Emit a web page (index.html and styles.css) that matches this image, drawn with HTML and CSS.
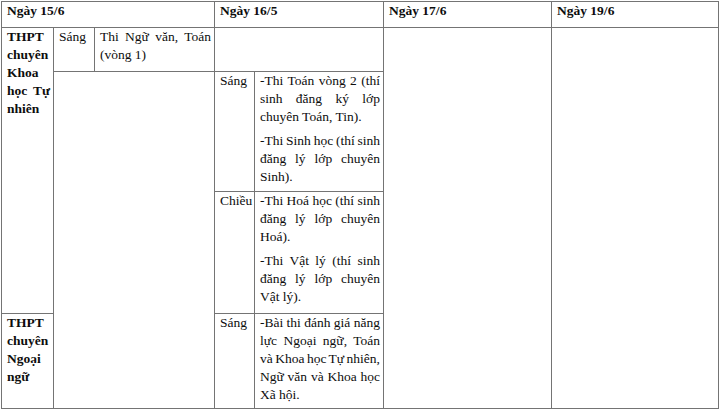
FILE: index.html
```html
<!DOCTYPE html>
<html lang="vi">
<head>
<meta charset="utf-8">
<title>Lịch thi</title>
<link rel="stylesheet" href="styles.css">
</head>
<body>
<table class="schedule">
  <colgroup>
    <col class="c-a"><col class="c-b"><col class="c-c"><col class="c-d"><col class="c-e"><col class="c-f"><col class="c-g">
  </colgroup>
  <tr class="r-head">
    <th colspan="3">Ngày 15/6</th>
    <th colspan="2">Ngày 16/5</th>
    <th>Ngày 17/6</th>
    <th>Ngày 19/6</th>
  </tr>
  <tr class="r-1">
    <td rowspan="3" class="school">
      <span class="ln">THPT</span>
      <span class="ln">chuyên</span>
      <span class="ln">Khoa</span>
      <span class="ln jl">học Tự</span>
      <span class="ln">nhiên</span>
    </td>
    <td class="sess sess-b">Sáng</td>
    <td class="txt">
      <span class="ln jl">Thi Ngữ văn, Toán</span>
      <span class="ln">(vòng 1)</span>
    </td>
    <td colspan="2"></td>
    <td rowspan="4"></td>
    <td rowspan="4"></td>
  </tr>
  <tr class="r-2">
    <td colspan="2" rowspan="3"></td>
    <td class="sess">Sáng</td>
    <td class="txt">
      <p class="para">
        <span class="ln jl">-Thi Toán vòng 2 (thí</span>
        <span class="ln jl">sinh đăng ký lớp</span>
        <span class="ln">chuyên Toán, Tin).</span>
      </p>
      <p class="para">
        <span class="ln jl">-Thi Sinh học (thí sinh</span>
        <span class="ln jl">đăng lý lớp chuyên</span>
        <span class="ln">Sinh).</span>
      </p>
    </td>
  </tr>
  <tr class="r-3">
    <td class="sess">Chiều</td>
    <td class="txt">
      <p class="para">
        <span class="ln jl">-Thi Hoá học (thí sinh</span>
        <span class="ln jl">đăng lý lớp chuyên</span>
        <span class="ln">Hoá).</span>
      </p>
      <p class="para">
        <span class="ln jl">-Thi Vật lý (thí sinh</span>
        <span class="ln jl">đăng lý lớp chuyên</span>
        <span class="ln">Vật lý).</span>
      </p>
    </td>
  </tr>
  <tr class="r-4">
    <td class="school">
      <span class="ln">THPT</span>
      <span class="ln">chuyên</span>
      <span class="ln">Ngoại</span>
      <span class="ln">ngữ</span>
    </td>
    <td class="sess">Sáng</td>
    <td class="txt">
      <span class="ln jl">-Bài thi đánh giá năng</span>
      <span class="ln jl">lực Ngoại ngữ, Toán</span>
      <span class="ln jl">và Khoa học Tự nhiên,</span>
      <span class="ln jl">Ngữ văn và Khoa học</span>
      <span class="ln">Xã hội.</span>
    </td>
  </tr>
</table>
</body>
</html>
```

FILE: styles.css
```css
html, body {
  margin: 0;
  padding: 0;
  background: #ffffff;
}

body {
  font-family: "Liberation Serif", "Times New Roman", serif;
  font-size: 13.5px;
  line-height: 18px;
  color: #0d0d0d;
}

.schedule {
  margin: 1px 0 0 1px;
  width: 718px;
  border-collapse: collapse;
  table-layout: fixed;
}

.c-a { width: 52px; }
.c-b { width: 41px; }
.c-c { width: 120px; }
.c-d { width: 40px; }
.c-e { width: 129px; }
.c-f { width: 168px; }
.c-g { width: 167px; }

.schedule th,
.schedule td {
  border: 1px solid #747474;
  vertical-align: top;
  padding: 0 3px 0 5px;
  text-align: left;
}

.schedule th {
  font-weight: bold;
}

.r-head { height: 26px; }
.r-1 { height: 44px; }
.r-2 { height: 120px; }
.r-3 { height: 122px; }
.r-4 { height: 95px; }

.school {
  font-weight: bold;
}

.sess-b {
  padding-left: 7px;
}

.ln {
  display: block;
  white-space: nowrap;
}

.jl {
  text-align: justify;
  text-align-last: justify;
  word-spacing: -1px;
}

.para {
  margin: 0 0 6px 0;
}

.para:last-child {
  margin-bottom: 0;
}
```
